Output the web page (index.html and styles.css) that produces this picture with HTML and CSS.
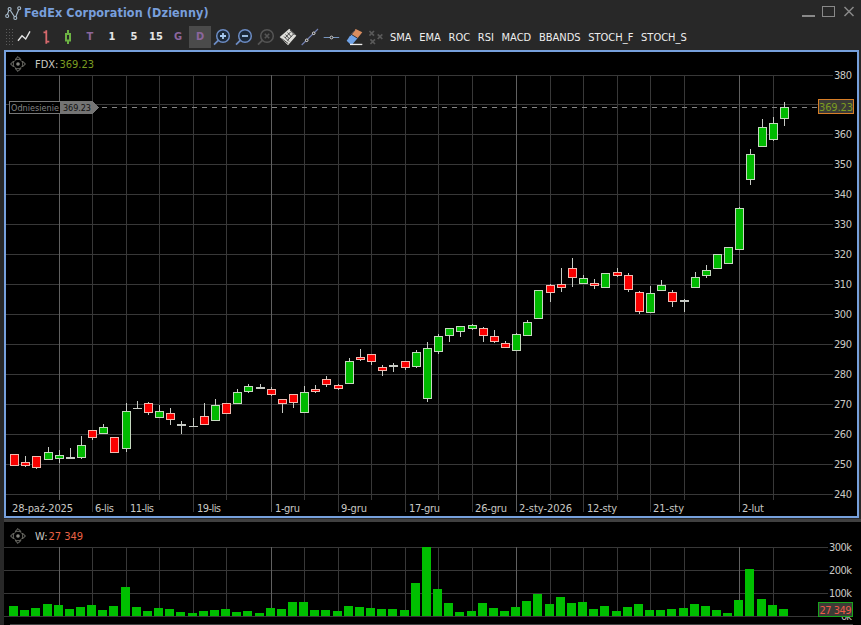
FILE: index.html
```
<!DOCTYPE html>
<html lang="pl">
<head>
<meta charset="utf-8">
<title>FedEx Corporation (Dzienny)</title>
<link rel="stylesheet" href="styles.css">
</head>
<body>
<svg class="defs" width="0" height="0" aria-hidden="true">
  <symbol id="move" viewBox="0 0 16 16">
    <g fill="none" stroke="#85857f" stroke-width="1"><path d="M5.200 3.400 8 .6l2.800 2.800zM5.200 12.600 8 15.400l2.800-2.800zM3.400 5.200.6 8l2.800 2.800zM12.600 5.200 15.400 8l-2.800 2.800z"/><circle cx="8" cy="8" r="4.700" stroke="#55554f"/></g>
    <circle cx="8" cy="8" r="1.800" fill="#85857f"/>
  </symbol>
</svg>
<div class="window">
  <header class="titlebar">
    <svg class="logo" width="18" height="16" viewBox="0 0 18 16"><g fill="#282828" stroke="#a9bccd" stroke-width="1.100"><path fill="none" d="M1.800 11 4.400 4l5.900 9 3.900-9.700"/><circle cx="2.200" cy="11" r="1.500"/><circle cx="4.600" cy="4" r="1.500"/><circle cx="10.300" cy="13" r="1.500"/><circle cx="14.200" cy="3.300" r="1.500"/></g></svg>
    <h1>FedEx Corporation (Dzienny)</h1>
    <svg class="controls" width="54" height="14" viewBox="0 0 54 14"><g fill="none" stroke="#898989"><path stroke-width="2" d="M0 11h13"/><rect x="20.500" y="1.500" width="12" height="10"/><path stroke-width="1.500" d="m42.500 2 9 9m0-9-9 9"/></g></svg>
  </header>
  <nav class="toolbar">
    <span class="grip"></span>
    <svg class="tool" viewBox="0 0 22 22"><path fill="none" stroke="#e4e4e4" stroke-width="1.400" d="m5 14.700 4-5 3.700 3.300L17 5.300"/></svg>
    <svg class="tool" viewBox="0 0 22 22"><path fill="none" stroke="#d8696d" stroke-width="1.800" d="M11.300 4.300v13.400M8.500 6.300h2.800m0 9.300h3"/></svg>
    <svg class="tool" viewBox="0 0 22 22"><path fill="none" stroke="#6cb243" stroke-width="2" d="M11 4v3m0 8v3M9 8h4v6.500H9z"/></svg>
    <span class="tool violet">T</span>
    <span class="tool">1</span>
    <span class="tool">5</span>
    <span class="tool">15</span>
    <span class="tool violet">G</span>
    <span class="tool violet active">D</span>
    <svg class="tool" viewBox="0 0 22 22"><g fill="none" stroke="#6c8cc4"><path stroke-width="1.800" d="m3 18.700 4.500-4.500"/><circle cx="12" cy="10" r="6.300" stroke-width="1.500" fill="#1b2838"/><path stroke="#a7c9f0" stroke-width="1.800" d="M9 10h6m-3-3v6"/></g></svg>
    <svg class="tool" viewBox="0 0 22 22"><g fill="none" stroke="#6c8cc4"><path stroke-width="1.800" d="m3 18.700 4.500-4.500"/><circle cx="12" cy="10" r="6.300" stroke-width="1.500" fill="#1b2838"/><path stroke="#a7c9f0" stroke-width="1.800" d="M9 10h6"/></g></svg>
    <svg class="tool" viewBox="0 0 22 22"><g fill="none" stroke="#555"><path stroke-width="1.800" d="m3 18.700 4.500-4.500"/><circle cx="12" cy="10" r="6.300" stroke-width="1.500"/><path stroke-width="1.600" d="m9.800 7.800 4.400 4.400m0-4.400-4.400 4.400"/></g></svg>
    <svg class="tool" viewBox="0 0 22 22"><path fill="#dededa" d="m12.300 2.700 7 7-8.300 9.600L2.700 11z"/><path fill="none" stroke="#4a4a4a" d="m4.500 12.500 6.700 5M8.500 8.500l4 4.500m-2-6.500 4 4.500m-1.500-7 4.500 5M7 10.500l5 5M8 12l5.500-6m-3 8.500 6-6.500"/></svg>
    <svg class="tool" viewBox="0 0 22 22"><path stroke="#7482b5" stroke-width="1.100" d="M2.700 19 19 3"/><g fill="#282828" stroke="#ddd"><circle cx="7.700" cy="14.300" r="1.300"/><circle cx="14.700" cy="7.300" r="1.300"/></g></svg>
    <svg class="tool" viewBox="0 0 22 22"><path stroke="#7594bd" d="M2.700 11.500h15.500"/><circle cx="10.500" cy="11.500" r="1.400" fill="#282828" stroke="#d0d0d0"/></svg>
    <svg class="tool" viewBox="0 0 22 22"><path fill="#d98d5f" d="m12.700 3 6.600 3.300-4.800 6-6.500-4z"/><path fill="#70a3e8" d="m8 8.300 6.500 4-4.800 5.600H7l-3.300-3.200z"/><path fill="#eee" d="M7 17.800h12.300v1.300H7z"/><path fill="none" stroke="#343a48" d="m8 8.200 6.500 4M12 4l-5 6"/></svg>
    <svg class="tool" viewBox="0 0 22 22"><path fill="none" stroke="#595959" stroke-width="1.700" d="m4.400 5 4.600 4.600m0-4.600L4.400 9.600m8.300-1.200 4.600 4.600m0-4.600L12.700 13m-7.300.4L10 18m0-4.600L5.400 18"/></svg>
    <div class="indicators"><span>SMA</span><span>EMA</span><span>ROC</span><span>RSI</span><span>MACD</span><span>BBANDS</span><span>STOCH_F</span><span>STOCH_S</span></div>
  </nav>
  <main class="panels">
    <section class="panel price">
      <div class="legend"><svg width="16" height="16"><use href="#move"/></svg><span>FDX:</span><b class="olive">369.23</b></div>
      <svg class="plot" id="price" width="855" height="468" viewBox="4 50 855 468" shape-rendering="crispEdges">
        <g class="grid"></g>
        <path class="reference-line" d="M102 107.500H818"/>
        <g class="series"></g>
        <g class="ylabels"></g>
        <g class="xlabels"></g>
        <rect x="9.500" y="101.500" width="51" height="12" fill="#000" stroke="#777"/>
        <path d="M60 101h33l6 6.500-6 6.500H60z" fill="#747474"/>
        <text class="ref-name" x="11" y="111" textLength="48">Odniesienie</text>
        <text class="ref-value" x="63" y="111" textLength="28">369.23</text>
        <rect x="818.500" y="99.500" width="35" height="14" fill="#3b3b36" stroke="#d77e27"/>
        <text class="last-price" x="819" y="111" textLength="34">369.23</text>
      </svg>
    </section>
    <section class="panel volume">
      <div class="legend"><svg width="16" height="16"><use href="#move"/></svg><span>W:</span><b class="coral">27 349</b></div>
      <svg class="plot" id="volume" width="857" height="103" viewBox="4 522 857 103" shape-rendering="crispEdges">
        <g class="grid"></g>
        <g class="series"></g>
        <g class="ylabels"></g>
        <rect x="818.500" y="602.500" width="34" height="14" fill="#3b3b36" stroke="#18a51c"/>
        <text class="last-volume" x="819.500" y="614" textLength="32">27 349</text>
        <path d="M10 624.500H853" stroke="#444"/>
      </svg>
    </section>
  </main>
</div>
<script src="chart.js"></script>
</body>
</html>
```
FILE: styles.css
```
* { box-sizing: border-box; }
body { margin: 0; background: #282828; color: #c9c9c4; font: 11px "DejaVu Sans Condensed", "DejaVu Sans", sans-serif; font-stretch: condensed; }
.defs { position: absolute; }
.window { width: 861px; height: 625px; display: flex; flex-direction: column; overflow: hidden; }
.titlebar { height: 26px; display: flex; align-items: center; padding: 0 5px 2px; }
.logo { margin-top: 2px; }
h1 { margin: 2px auto 0 1px; color: #789fdc; font-size: 12.5px; line-height: 18px; letter-spacing: .1px; white-space: nowrap; }
.controls { margin-right: 0; }
.toolbar { height: 24px; display: flex; align-items: center; padding: 0 0 2px 5px; }
.grip { width: 8px; height: 18px; background: radial-gradient(circle, #5a5a5a .7px, transparent 1px) 0 0 / 3px 3px; }
.tool { width: 22px; height: 22px; flex: none; text-align: center; line-height: 22px; font-weight: bold; color: #e6e6e6; }
.violet { color: #8b669d; }
.active { background: #4b4b4b; }
.indicators { display: flex; gap: 7.7px; margin-left: 3px; color: #eee; white-space: nowrap; }
.panels { height: 575px; padding-left: 4px; display: flex; flex-direction: column; background: linear-gradient(#404040, #404040) 4px 469px / 857px 3px no-repeat; }
.panel { background: #000; position: relative; }
.price { width: 855px; height: 468px; border: 2px solid #76a0dc; flex: none; overflow: hidden; margin-bottom: 4px; }
.price .plot { margin: -2px; display: block; }
.volume { height: 103px; flex: none; }
.volume .plot { display: block; }
.legend { position: absolute; left: 6px; top: 6px; height: 16px; display: flex; align-items: center; font-size: 11px; white-space: nowrap; }
.price .legend { left: 4px; top: 4px; }
.legend span { margin-left: 9px; }
.legend b { font-weight: normal; margin-left: 1px; }
.olive { color: #7b9c20; }
.coral { color: #eb6245; }
.grid path { fill: none; stroke: #383838; }
.grid .month { stroke: #606060; }
.reference-line { stroke: #858585; stroke-dasharray: 5 5; }
.wick { stroke: #c7cbc5; }
.body { stroke: #c5d8bf; }
.up { fill: #00b900; }
.down { fill: #fa0000; stroke: #f0bab0; }
.bar { fill: #00bf00; }
text { fill: #c9c9c4; font-size: 11px; }
.ref-name { fill: #858585; font-size: 9px; }
.ref-value { fill: #111; font-size: 9px; }
.last-price { fill: #7b9c20; }
.last-volume { fill: #ef5a49; }
```
FILE: chart.js
```
const candles = [
[454,454,466,466,'r'],[456,462,466,467,'r'],[456,456,468,469,'r'],[447,452,460,460,'g'],[450,455,459,463,'g'],[448,457,459,459,'d'],[436,445,458,459,'g'],[430,430,438,440,'r'],[424,427,434,434,'g'],[437,437,453,453,'r'],
[403,411,449,452,'g'],[401,408,409,409,'d'],[402,403,413,415,'r'],[405,411,418,418,'g'],[408,413,420,425,'r'],[421,424,426,434,'d'],[418,426,427,427,'d'],[403,416,425,425,'r'],[399,405,421,421,'g'],[403,403,414,414,'r'],
[389,392,404,404,'g'],[384,386,392,393,'g'],[384,387,389,389,'d'],[387,389,395,396,'r'],[399,399,404,413,'r'],[394,394,403,408,'r'],[386,392,413,413,'g'],[385,389,392,393,'r'],[376,379,385,387,'r'],[384,385,389,390,'r'],
[358,361,384,384,'g'],[349,357,360,361,'r'],[354,354,362,365,'r'],[365,367,371,376,'r'],[363,365,367,372,'d'],[361,361,368,370,'r'],[350,352,367,368,'g'],[342,348,399,402,'g'],[334,336,352,354,'g'],[328,328,336,342,'g'],
[326,326,332,337,'g'],[324,325,329,330,'g'],[327,328,336,342,'r'],[330,336,342,343,'r'],[341,343,348,348,'r'],[333,334,351,351,'g'],[320,322,336,336,'g'],[290,290,319,319,'g'],[284,285,293,302,'r'],[268,284,288,292,'r'],
[258,268,278,287,'r'],[275,278,284,284,'g'],[279,283,286,289,'r'],[273,273,288,288,'g'],[268,272,276,277,'r'],[273,275,290,292,'r'],[291,292,312,314,'r'],[286,293,313,313,'g'],[280,285,291,291,'g'],[290,292,302,307,'r'],
[299,300,302,312,'d'],[272,277,288,288,'g'],[265,270,276,278,'g'],[254,254,269,269,'g'],[247,247,264,264,'g'],[207,208,250,250,'g'],[149,154,180,185,'g'],[119,127,147,147,'g'],[117,123,140,141,'g'],[102,107,119,126,'g']];
const centers = [14,25,36,48,59,70,81,92,103,114,126,137,148,159,170,181,193,204,215,226,237,248,260,271,282,293,304,315,326,338,349,360,371,382,393,405,416,427,438,449,460,472,483,494,505,516,527,538,550,561,572,583,594,605,617,628,639,650,661,672,684,695,706,717,728,739,750,762,773,784];
const volumeTops = [606,610,608,604,605,609,607,605,610,606,587,607,611,608,609,612,613,611,610,609,612,611,613,608,609,602,602,610,610,611,606,607,608,609,609,610,583,547,589,603,612,611,603,608,611,607,601,594,604,597,603,602,609,606,611,607,604,610,610,609,608,604,606,610,613,600,569,599,605,609];
const dates = [[12,'28-paź-2025',61],[95,'6-lis',19],[130,'11-lis',24],[197,'19-lis',24],[275,'1-gru',25],[341,'9-gru',26],[409,'17-gru',31],[475,'26-gru',32],[519,'2-sty-2026',53],[587,'12-sty',30],[653,'21-sty',31],[742,'2-lut',22]];
const columns = [59,92,126,159,193,226,271,304,338,371,405,438,472,516,550,583,617,650,684,739,773];
const months = [59,271,516,739];
const labelled = [92,126,193,271,338,405,472,516,583,650,739];
const fill = (selector, markup) => { document.querySelector(selector).innerHTML = markup; };
const label = (x, y, text, length) => `<text x="${x}" y="${y}" textLength="${length}">${text}</text>`;

const rows = [75,104,...Array.from({length: 13}, (_, i) => 134 + i * 30)];
const vertical = (top, end) => columns.map(x => `<path class="${months.includes(x) ? 'month' : ''}" d="M${x + .5} ${top}V${end(x)}"/>`).join('');
fill('#price .grid', rows.map(y => `<path d="M6 ${y + .5}H833"/>`).join('') + vertical(75, x => labelled.includes(x) ? 512 : 500));
fill('#price .series', candles.map(([high, top, bottom, low, kind], i) => {
  const x = centers[i];
  const wick = `<path class="wick" d="M${x + .5} ${high}V${low}"/>`;
  if (kind === 'd') return wick + `<rect x="${x - 4}" y="${top}" width="9" height="${bottom - top}" fill="#c7cbc5"/>`;
  return wick + `<rect class="body ${kind === 'g' ? 'up' : 'down'}" x="${x - 3.5}" y="${top + .5}" width="8" height="${bottom - top - 1}"/>`;
}).join(''));
fill('#price .ylabels', rows.map((y, i) => i === 1 ? '' : label(834, y + 4, 380 - i * 10, 18)).join(''));
fill('#price .xlabels', dates.map(([x, text, length]) => label(x, 512, text, length)).join(''));
fill('#volume .grid', [547,570,593,616].map(y => `<path d="M4 ${y + .5}H${y === 616 ? 838 : 828}"/>`).join('') + vertical(547, () => 616));
fill('#volume .series', volumeTops.map((y, i) => `<rect class="bar" x="${centers[i] - 5}" y="${y}" width="9" height="${616 - y}"/>`).join(''));
fill('#volume .ylabels', label(829, 551, '300k', 23) + label(829, 574, '200k', 23) + label(829, 597, '100k', 23) + label(841, 620, '0k', 11));
```
